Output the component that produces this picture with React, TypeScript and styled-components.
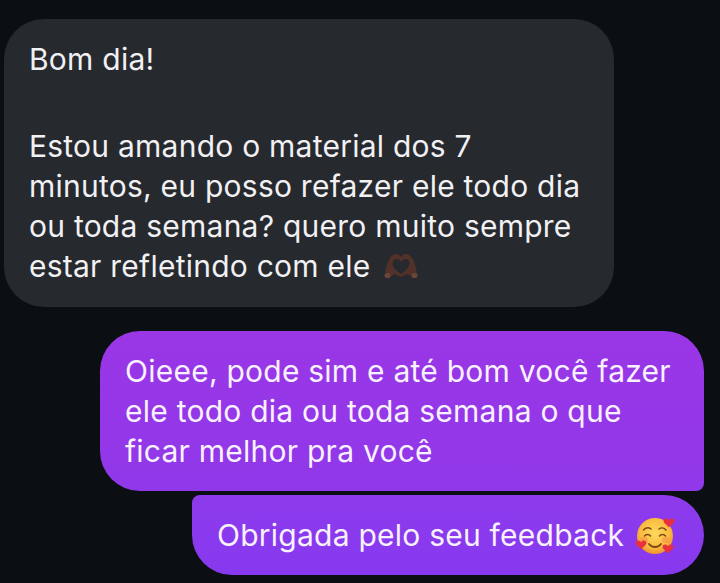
import styled, { createGlobalStyle } from "styled-components";

const GlobalStyle = createGlobalStyle`
  html, body {
    margin: 0;
    padding: 0;
    height: 100%;
    background: #0b0f13;
    overflow: hidden;
  }
`;

const Thread = styled.div`
  display: flex;
  flex-direction: column;
  width: 720px;
  height: 583px;
  padding: 19px 16px 0 4px;
  box-sizing: border-box;
  font-family: Inter, "Liberation Sans", sans-serif;
  font-size: 30px;
  letter-spacing: 0.24px;
  line-height: 40px;
  white-space: nowrap;
  color: #f1f0f3;
`;

const Received = styled.div`
  width: 610px;
  box-sizing: border-box;
  padding: 20px 25px 21px;
  border-radius: 40px;
  background: #26292e;
`;

const Paragraph = styled.p`
  margin: 0 0 47px;

  &:last-child {
    margin-bottom: 0;
  }
`;

const Sent = styled.div<{ $width: number; $gap: number; $corners: string; $from: string; $to: string }>`
  align-self: flex-end;
  width: ${(p) => p.$width}px;
  margin-top: ${(p) => p.$gap}px;
  box-sizing: border-box;
  padding: 20px 25px;
  border-radius: ${(p) => p.$corners};
  background: linear-gradient(180deg, ${(p) => p.$from}, ${(p) => p.$to});
  color: #f8f1fe;
`;

const Emoji = styled.svg<{ $lift: number }>`
  display: inline-block;
  vertical-align: ${(p) => p.$lift}px;
  margin: -20px 0 -20px 2px;
`;

function HeartHands() {
  return (
    <Emoji $lift={15} width="40" height="32" viewBox="0 0 40 32">
      <path
        fillRule="evenodd"
        d="M4 25 C5 14 9 4 15 4 C17 4 19 5 20 7 C21 5 23 4 25 4 C31 4 35 14 36 25 C36 28 33 29 31 27 L27 24 L20 27 L13 24 L9 27 C7 29 4 28 4 25 Z M20 12 C18 9 15 8 13 10 C10 13 11 18 20 24 C29 18 30 13 27 10 C25 8 22 9 20 12 Z"
        fill="#523228"
      />
      <ellipse cx="6.5" cy="25.5" rx="3" ry="2.6" fill="#6a463b" />
      <ellipse cx="33.5" cy="25.5" rx="3" ry="2.6" fill="#6a463b" />
    </Emoji>
  );
}

function Heart({ x, y }: { x: number; y: number }) {
  return (
    <path
      transform={`translate(${x} ${y})`}
      d="M0 4.5 C-2 2 -5.5 0 -5.5 -2 C-5.5 -5 -1.5 -5.5 0 -2.5 C1.5 -5.5 5.5 -5 5.5 -2 C5.5 0 2 2 0 4.5 Z"
      fill="#e8303f"
    />
  );
}

function SmilingHearts() {
  return (
    <Emoji $lift={10} width="42" height="40" viewBox="0 0 42 40">
      <defs>
        <radialGradient id="face" cx="50%" cy="42%" r="58%">
          <stop offset="0%" stopColor="#fdd95e" />
          <stop offset="70%" stopColor="#fabb3e" />
          <stop offset="100%" stopColor="#ef922d" />
        </radialGradient>
      </defs>
      <circle cx="20" cy="20" r="18" fill="url(#face)" />
      <ellipse cx="9" cy="24" rx="4" ry="3" fill="#f58a4b" opacity="0.5" />
      <ellipse cx="31" cy="24" rx="4" ry="3" fill="#f58a4b" opacity="0.5" />
      <g fill="none" stroke="#7a4715" strokeWidth="1.5" strokeLinecap="round">
        <path d="M8.5 14 C11 11.5 14 11.5 16 13" />
        <path d="M24 13 C26 11.5 29 11.5 31 14" />
        <path d="M9.5 20 C11 18 14 18 15.5 20" />
        <path d="M24.5 20 C26 18 29 18 30.5 20" />
        <path d="M14 28 C17 32 23 32 26 28" strokeWidth="1.8" />
      </g>
      <Heart x={34} y={7} />
      <Heart x={6} y={29} />
      <Heart x={33} y={33} />
    </Emoji>
  );
}

export default function App() {
  return (
    <>
      <GlobalStyle />
      <Thread>
        <Received>
          <Paragraph>Bom dia!</Paragraph>
          <Paragraph>
            Estou amando o material dos 7<br />
            minutos, eu posso refazer ele todo dia<br />
            ou toda semana? quero muito sempre<br />
            estar refletindo com ele <HeartHands />
          </Paragraph>
        </Received>
        <Sent $width={604} $gap={24} $corners="40px 40px 8px 40px" $from="#9a36e6" $to="#9038ea">
          Oieee, pode sim e até bom você fazer<br />
          ele todo dia ou toda semana o que<br />
          ficar melhor pra você
        </Sent>
        <Sent $width={512} $gap={4} $corners="8px 40px 40px 40px" $from="#8d3aec" $to="#8739ef">
          Obrigada pelo seu feedback <SmilingHearts />
        </Sent>
      </Thread>
    </>
  );
}
